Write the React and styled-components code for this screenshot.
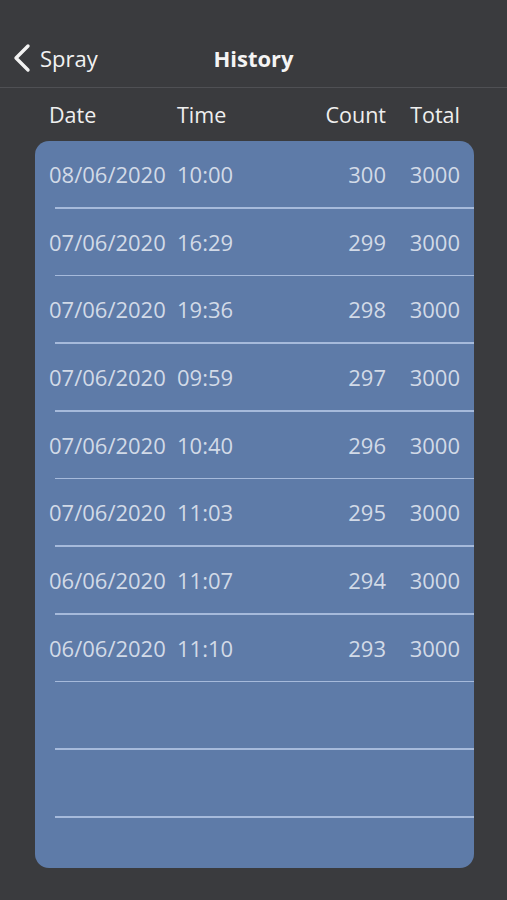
import React from "react";
import styled, { createGlobalStyle } from "styled-components";

const GlobalStyle = createGlobalStyle`
  html, body {
    margin: 0;
    padding: 0;
    background: #3a3b3e;
  }
  body {
    font-family: "Open Sans", "Liberation Sans", sans-serif;
  }
`;

const Screen = styled.div`
  width: 507px;
  height: 900px;
  background: #3a3b3e;
  display: flex;
  flex-direction: column;
  overflow: hidden;
`;

const NavBar = styled.div`
  height: 57px;
  padding-top: 30px;
  border-bottom: 1px solid #4f5054;
  display: grid;
  grid-template-columns: 1fr auto 1fr;
  align-items: center;
  box-sizing: content-box;
`;

const BackButton = styled.div`
  display: flex;
  align-items: center;
  gap: 8px;
  padding-left: 12px;
  color: #f2f2f2;
  font-size: 22px;
  padding-bottom: 2px;
`;

const Title = styled.div`
  color: #f4f4f4;
  font-size: 22px;
  font-weight: 700;
  padding-bottom: 2px;
`;

const Columns = styled.div`
  display: grid;
  grid-template-columns: 128px 1fr 80px 74px;
  align-items: center;
  padding: 0 14px;
`;

const HeaderRow = styled(Columns)`
  height: 53px;
  margin: 0 33px 0 35px;
  color: #efefef;
  font-size: 21.5px;
`;

const Cell = styled.span`
  text-align: ${(p) => (p.$right ? "right" : "left")};
  white-space: nowrap;
`;

const Card = styled.div`
  margin: 0 33px 0 35px;
  height: 727px;
  background: #5e7ba8;
  border-radius: 14px;
  overflow: hidden;
`;

const Row = styled.div`
  height: 67.67px;
  display: flex;
  flex-direction: column;
`;

const RowBody = styled(Columns)`
  flex: 1;
  color: #d2dae7;
  font-size: 22px;
`;

const Divider = styled.div`
  height: 1.5px;
  margin-left: 20px;
  background: #a6badb;
`;

const entries = [
  ["08/06/2020", "10:00", "300", "3000"],
  ["07/06/2020", "16:29", "299", "3000"],
  ["07/06/2020", "19:36", "298", "3000"],
  ["07/06/2020", "09:59", "297", "3000"],
  ["07/06/2020", "10:40", "296", "3000"],
  ["07/06/2020", "11:03", "295", "3000"],
  ["06/06/2020", "11:07", "294", "3000"],
  ["06/06/2020", "11:10", "293", "3000"],
  null,
  null,
  null,
];

function Chevron() {
  return (
    <svg width="20" height="30" viewBox="0 0 20 30">
      <path
        d="M16 3 L4 15 L16 27"
        fill="none"
        stroke="#f2f2f2"
        strokeWidth="3.4"
        strokeLinecap="round"
        strokeLinejoin="round"
      />
    </svg>
  );
}

export default function App() {
  return (
    <>
      <GlobalStyle />
      <Screen>
        <NavBar>
          <BackButton>
            <Chevron />
            <span>Spray</span>
          </BackButton>
          <Title>History</Title>
          <div />
        </NavBar>
        <HeaderRow>
          <Cell>Date</Cell>
          <Cell>Time</Cell>
          <Cell $right>Count</Cell>
          <Cell $right>Total</Cell>
        </HeaderRow>
        <Card>
          {entries.map((e, i) => (
            <Row key={i}>
              <RowBody>
                {e && (
                  <>
                    <Cell>{e[0]}</Cell>
                    <Cell>{e[1]}</Cell>
                    <Cell $right>{e[2]}</Cell>
                    <Cell $right>{e[3]}</Cell>
                  </>
                )}
              </RowBody>
              <Divider />
            </Row>
          ))}
        </Card>
      </Screen>
    </>
  );
}
